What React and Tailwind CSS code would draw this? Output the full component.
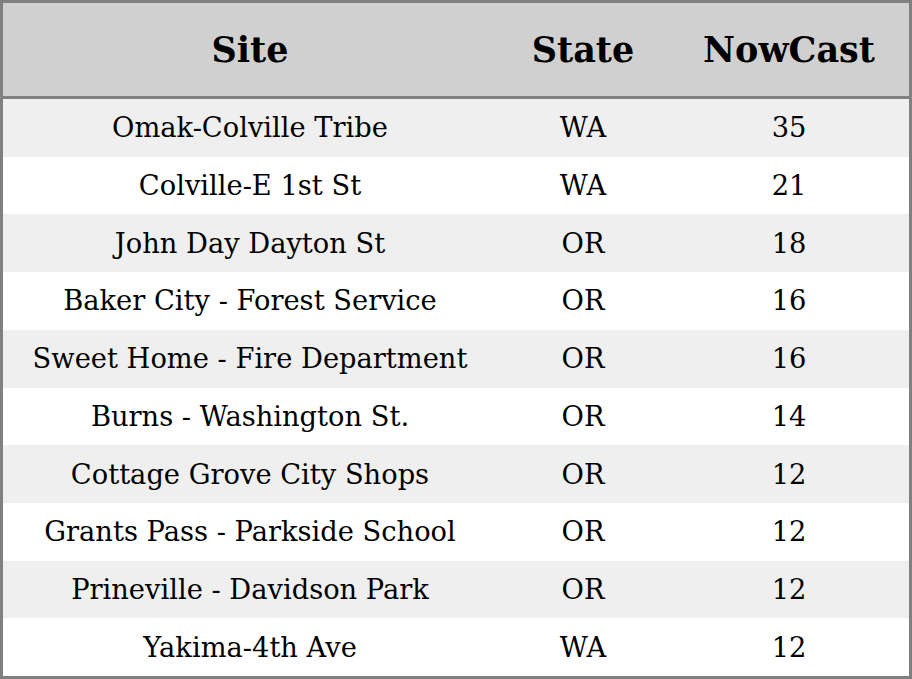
import React from "react";

const rows = [
  ["Omak-Colville Tribe", "WA", 35],
  ["Colville-E 1st St", "WA", 21],
  ["John Day Dayton St", "OR", 18],
  ["Baker City - Forest Service", "OR", 16],
  ["Sweet Home - Fire Department", "OR", 16],
  ["Burns - Washington St.", "OR", 14],
  ["Cottage Grove City Shops", "OR", 12],
  ["Grants Pass - Parkside School", "OR", 12],
  ["Prineville - Davidson Park", "OR", 12],
  ["Yakima-4th Ave", "WA", 12],
];

export default function App() {
  return (
    <div className="w-[912px] h-[679px] bg-white font-['DejaVu_Serif',serif] text-black border-[3px] border-[#808080] flex flex-col">
      <div className="grid grid-cols-[494px_172px_1fr] h-[96px] shrink-0 pt-[2px] bg-[#d0d0d0] border-b-[3px] border-[#808080] items-center text-[35px] font-bold text-center">
        <div>Site</div>
        <div>State</div>
        <div>NowCast</div>
      </div>
      <div className="flex-1 flex flex-col">
        {rows.map(([site, state, val], i) => (
          <div
            key={site}
            className={`flex-1 grid grid-cols-[494px_172px_1fr] items-center text-center text-[27.3px] pt-[2px] ${i % 2 === 0 ? "bg-[#efefef]" : "bg-white"}`}
          >
            <div>{site}</div>
            <div>{state}</div>
            <div>{val}</div>
          </div>
        ))}
      </div>
    </div>
  );
}
